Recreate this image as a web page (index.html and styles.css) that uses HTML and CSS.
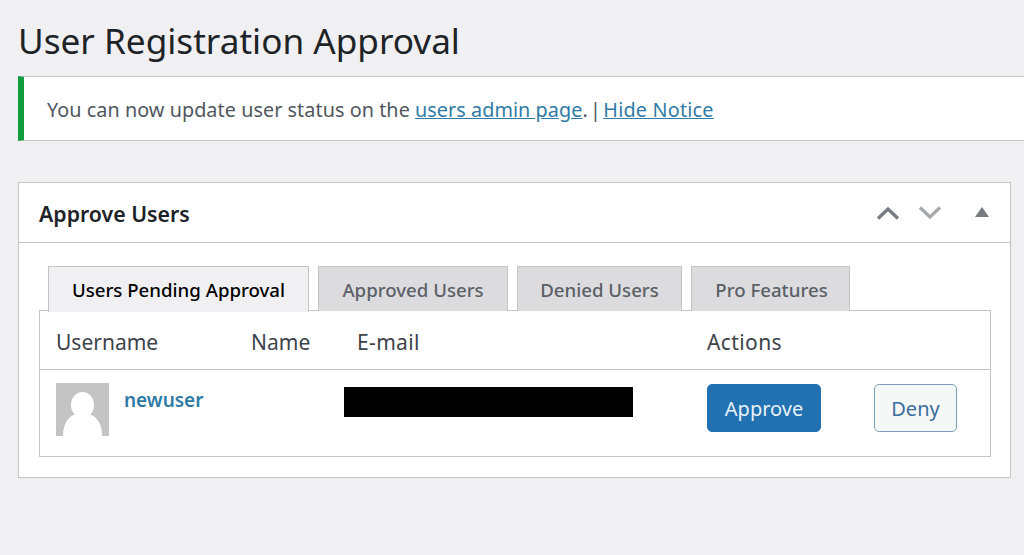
FILE: index.html
```html
<!DOCTYPE html>
<html lang="en">
<head>
<meta charset="utf-8">
<title>User Registration Approval</title>
<link rel="stylesheet" href="styles.css">
</head>
<body>
<main class="wrap">
  <h1 class="title">User Registration Approval</h1>
  <div class="notice">
    <p>You can now update user status on the <a href="#">users admin page</a><span class="sep">. | </span><a class="hide" href="#">Hide Notice</a></p>
  </div>
  <section class="postbox">
    <header class="postbox-head">
      <h2>Approve Users</h2>
      <div class="handles">
        <svg class="chev" width="24" height="14" viewBox="0 0 24 14"><path d="M2 12.500 12 3l10 9.500" fill="none" stroke="#787c82" stroke-width="3.4"/></svg>
        <svg class="chev" width="24" height="14" viewBox="0 0 24 14"><path d="M2 1.500 12 11 22 1.500" fill="none" stroke="#a7aaad" stroke-width="3.4"/></svg>
        <svg class="tri" width="14" height="10" viewBox="0 0 14 10"><path d="M7 0l7 10H0z" fill="#787c82"/></svg>
      </div>
    </header>
    <div class="postbox-body">
      <nav class="tabs">
        <a class="tab active" href="#">Users Pending Approval</a>
        <a class="tab t2" href="#">Approved Users</a>
        <a class="tab t3" href="#">Denied Users</a>
        <a class="tab t4" href="#">Pro Features</a>
      </nav>
      <div class="table">
        <div class="row head">
          <span>Username</span>
          <span class="c-name">Name</span>
          <span class="c-mail">E-mail</span>
          <span class="c-act">Actions</span>
        </div>
        <div class="row user">
          <div class="user-cell">
            <svg class="avatar" width="53" height="53" viewBox="0 0 53 53"><rect width="53" height="53" fill="#c4c4c4"/><ellipse cx="26.500" cy="22" rx="11.500" ry="13" fill="#fff"/><path d="M7 53c0-14 7-23 19.500-23S46 39 46 53z" fill="#fff"/></svg>
            <a class="uname" href="#">newuser</a>
          </div>
          <span></span>
          <div class="redact"></div>
          <div class="actions">
            <a class="btn primary" href="#">Approve</a>
            <a class="btn secondary" href="#">Deny</a>
          </div>
        </div>
      </div>
    </div>
  </section>
</main>
</body>
</html>
```
FILE: styles.css
```css
* { box-sizing: border-box; }
html, body { margin: 0; height: 555px; overflow: hidden; }
body { background: #f0f0f2; color: #3c434a; font-family: "Noto Sans", "Open Sans", sans-serif; }
.wrap { padding: 0 13px 0 18px; }
.title { margin: 0; height: 76px; font-size: 35.15px; line-height: 80px; font-weight: 400; color: #1d2327; white-space: nowrap; }
.notice { height: 65px; margin-right: -13px; background: #fff; border: 1px solid #c3c4c7; border-left: 6px solid #0f9d3f; border-right: 0; display: flex; align-items: center; padding: 2px 0 0 23px; }
.notice p { margin: 0; font-size: 19.8px; letter-spacing: .055px; color: #50575e; white-space: pre; }
.notice a { color: #2f7ba6; text-decoration: underline; }
.notice .sep { word-spacing: -2px; letter-spacing: -.4px; }
.notice .hide { letter-spacing: .2px; }
.postbox { margin-top: 41px; height: 296px; background: #fff; border: 1px solid #c3c4c7; }
.postbox-head { height: 60px; border-bottom: 1px solid #c3c4c7; display: flex; align-items: center; justify-content: space-between; padding: 2px 21px 0 20px; }
.postbox-head h2 { margin: 0; font-size: 21.3px; font-weight: 600; color: #1d2327; }
.handles { display: flex; align-items: center; gap: 18px; margin-top: -2px; }
.tri { margin-left: 15px; margin-top: -2px; }
.postbox-body { padding: 23px 20px 0; }
.tabs { display: flex; padding-left: 9px; height: 45px; gap: 9px; position: relative; z-index: 1; margin-bottom: -1px; }
.tab { height: 45px; padding-top: 1px; border: 1px solid #c3c4c7; border-bottom: 0; background: #dcdcde; color: #5a6066; font-size: 18.65px; font-weight: 500; display: flex; align-items: center; justify-content: center; text-decoration: none; white-space: nowrap; }
.tab.active { width: 261px; background: #f0f0f2; color: #000; height: 46px; padding-top: 0; }
.t2 { width: 190px; }
.t3 { width: 165px; }
.t4 { width: 159px; padding-left: 2px; }
.table { height: 147px; width: 952px; border: 1px solid #c3c4c7; background: #fff; }
.row { display: grid; grid-template-columns: 195px 106px 350px 1fr; padding-left: 16px; }
.head { height: 59px; padding-top: 3px; align-items: center; border-bottom: 1px solid #c3c4c7; font-size: 21px; color: #3c434a; }
.c-mail { letter-spacing: .35px; }
.c-act { letter-spacing: .4px; }
.user { height: 86px; padding-top: 13px; align-items: start; grid-template-columns: 195px 93px 363px 1fr; }
.user-cell { display: flex; gap: 15px; }
.avatar { display: block; }
.uname { color: #2f7ba6; font-size: 19px; font-weight: 600; text-decoration: none; line-height: 35px; }
.redact { width: 289px; height: 30px; margin-top: 4px; background: #000; }
.actions { display: flex; gap: 53px; margin-top: 1px; }
.btn { height: 48px; border-radius: 5px; font-size: 20px; display: flex; align-items: center; justify-content: center; text-decoration: none; border: 1px solid #2271b1; }
.primary { width: 114px; background: #2271b1; color: #e8f2fa; }
.secondary { width: 83px; background: #f6f7f7; color: #3a6f9c; border-color: #7c9db5; }
```
